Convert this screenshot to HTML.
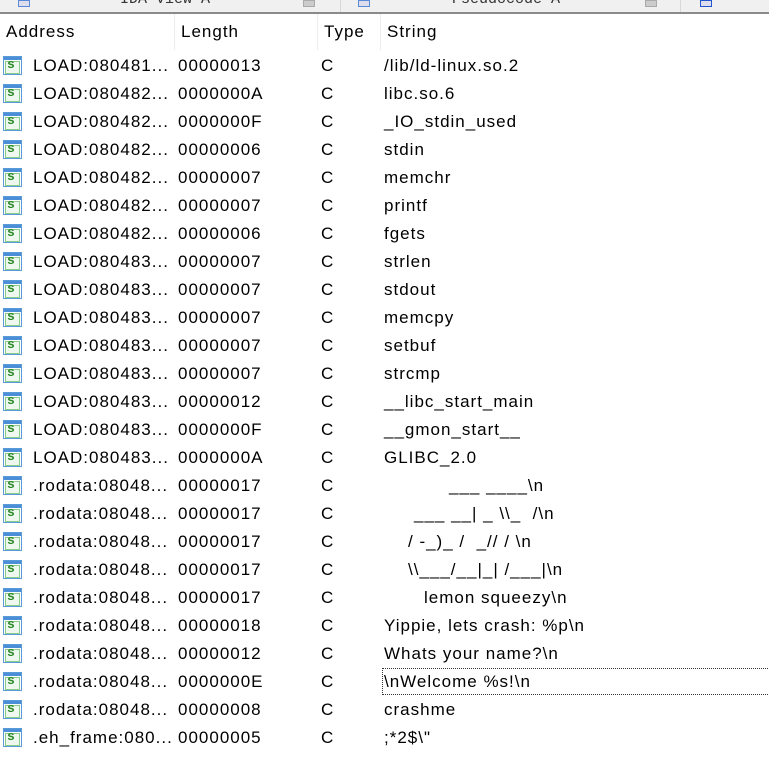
<!DOCTYPE html>
<html><head><meta charset="utf-8"><style>
body{margin:0;width:769px;height:768px;background:#fff;overflow:hidden;font-family:"Liberation Sans",sans-serif;font-size:17px;letter-spacing:1px;color:#000;position:relative}
.tabs{position:absolute;left:0;top:0;width:769px;height:12px;background:#f0f0f0;border-bottom:2px solid #8a8a8a;overflow:hidden}
.tabs span{position:absolute;top:-9px;font-family:"Liberation Mono",monospace;font-size:15px;color:#333;letter-spacing:0}
.tabs i{position:absolute;top:0;width:10px;height:5px;background:#ccc;border:1px solid #aaa}
.tabs b{position:absolute;top:0;width:1px;height:12px;background:#d8d8d8}
.hdr{position:absolute;top:14px;left:0;width:769px;height:36px}
.hdr div{position:absolute;top:8px}
.sep{position:absolute;top:14px;width:1px;height:36px;background:#ececec}
.row{position:absolute;left:0;width:769px;height:28px;line-height:28px;white-space:pre}
.row span{position:absolute;top:0}
.ic{position:absolute;left:3px;top:4px;width:19px;height:19px;border:1px solid #5a9ad8;background:#fff;box-sizing:border-box}
.ic:before{content:"";position:absolute;left:0;top:0;right:0;height:3px;background:#4a8fd8}
.ic:after{content:"";position:absolute;left:1px;top:4px;width:13px;height:11px;border:1px solid #8c8;background:#eef8ee}
.ic em{position:absolute;left:3px;top:-6px;font-style:normal;font-size:13px;font-weight:bold;color:#2a8a2a;font-family:"Liberation Mono",monospace;letter-spacing:0;z-index:1;line-height:28px}
.a{left:33px}.l{left:178px}.t{left:321px}.s{left:384px}
</style></head><body>
<div class="tabs">
<i style="left:18px;border-color:#5a8ad8;background:#dde"></i><span style="left:120px">IDA View-A</span><i style="left:303px"></i><b style="left:340px"></b>
<i style="left:358px;border-color:#5a8ad8;background:#dde"></i><span style="left:452px">Pseudocode-A</span><i style="left:645px"></i><b style="left:680px"></b>
<i style="left:700px;border-color:#2255cc;background:#dde"></i>
</div>
<div class="hdr"><div style="left:6px">Address</div><div style="left:181px">Length</div><div style="left:324px">Type</div><div style="left:387px">String</div></div>
<div class="sep" style="left:174px"></div><div class="sep" style="left:317px"></div><div class="sep" style="left:380px"></div>

<div class="row" style="top:52px"><div class="ic"><em>s</em></div><span class="a">LOAD:080481...</span><span class="l">00000013</span><span class="t">C</span><span class="s">/lib/ld-linux.so.2</span></div>
<div class="row" style="top:80px"><div class="ic"><em>s</em></div><span class="a">LOAD:080482...</span><span class="l">0000000A</span><span class="t">C</span><span class="s">libc.so.6</span></div>
<div class="row" style="top:108px"><div class="ic"><em>s</em></div><span class="a">LOAD:080482...</span><span class="l">0000000F</span><span class="t">C</span><span class="s">_IO_stdin_used</span></div>
<div class="row" style="top:136px"><div class="ic"><em>s</em></div><span class="a">LOAD:080482...</span><span class="l">00000006</span><span class="t">C</span><span class="s">stdin</span></div>
<div class="row" style="top:164px"><div class="ic"><em>s</em></div><span class="a">LOAD:080482...</span><span class="l">00000007</span><span class="t">C</span><span class="s">memchr</span></div>
<div class="row" style="top:192px"><div class="ic"><em>s</em></div><span class="a">LOAD:080482...</span><span class="l">00000007</span><span class="t">C</span><span class="s">printf</span></div>
<div class="row" style="top:220px"><div class="ic"><em>s</em></div><span class="a">LOAD:080482...</span><span class="l">00000006</span><span class="t">C</span><span class="s">fgets</span></div>
<div class="row" style="top:248px"><div class="ic"><em>s</em></div><span class="a">LOAD:080483...</span><span class="l">00000007</span><span class="t">C</span><span class="s">strlen</span></div>
<div class="row" style="top:276px"><div class="ic"><em>s</em></div><span class="a">LOAD:080483...</span><span class="l">00000007</span><span class="t">C</span><span class="s">stdout</span></div>
<div class="row" style="top:304px"><div class="ic"><em>s</em></div><span class="a">LOAD:080483...</span><span class="l">00000007</span><span class="t">C</span><span class="s">memcpy</span></div>
<div class="row" style="top:332px"><div class="ic"><em>s</em></div><span class="a">LOAD:080483...</span><span class="l">00000007</span><span class="t">C</span><span class="s">setbuf</span></div>
<div class="row" style="top:360px"><div class="ic"><em>s</em></div><span class="a">LOAD:080483...</span><span class="l">00000007</span><span class="t">C</span><span class="s">strcmp</span></div>
<div class="row" style="top:388px"><div class="ic"><em>s</em></div><span class="a">LOAD:080483...</span><span class="l">00000012</span><span class="t">C</span><span class="s">__libc_start_main</span></div>
<div class="row" style="top:416px"><div class="ic"><em>s</em></div><span class="a">LOAD:080483...</span><span class="l">0000000F</span><span class="t">C</span><span class="s">__gmon_start__</span></div>
<div class="row" style="top:444px"><div class="ic"><em>s</em></div><span class="a">LOAD:080483...</span><span class="l">0000000A</span><span class="t">C</span><span class="s">GLIBC_2.0</span></div>
<div class="row" style="top:472px"><div class="ic"><em>s</em></div><span class="a">.rodata:08048...</span><span class="l">00000017</span><span class="t">C</span><span style="left:449px">___ ____\n</span></div>
<div class="row" style="top:500px"><div class="ic"><em>s</em></div><span class="a">.rodata:08048...</span><span class="l">00000017</span><span class="t">C</span><span style="left:414px">___ __| _ \\_  /\n</span></div>
<div class="row" style="top:528px"><div class="ic"><em>s</em></div><span class="a">.rodata:08048...</span><span class="l">00000017</span><span class="t">C</span><span style="left:408px">/ -_)_ /  _// / \n</span></div>
<div class="row" style="top:556px"><div class="ic"><em>s</em></div><span class="a">.rodata:08048...</span><span class="l">00000017</span><span class="t">C</span><span style="left:408px">\\___/__|_| /___|\n</span></div>
<div class="row" style="top:584px"><div class="ic"><em>s</em></div><span class="a">.rodata:08048...</span><span class="l">00000017</span><span class="t">C</span><span style="left:424px">lemon squeezy\n</span></div>
<div class="row" style="top:612px"><div class="ic"><em>s</em></div><span class="a">.rodata:08048...</span><span class="l">00000018</span><span class="t">C</span><span class="s">Yippie, lets crash: %p\n</span></div>
<div class="row" style="top:640px"><div class="ic"><em>s</em></div><span class="a">.rodata:08048...</span><span class="l">00000012</span><span class="t">C</span><span class="s">Whats your name?\n</span></div>
<div class="row" style="top:668px"><div class="ic"><em>s</em></div><span class="a">.rodata:08048...</span><span class="l">0000000E</span><span class="t">C</span><span class="s">\nWelcome %s!\n</span><div style="position:absolute;left:382px;top:0;width:400px;height:27px;border:1px dotted #333;border-right:none;box-sizing:border-box"></div></div>
<div class="row" style="top:696px"><div class="ic"><em>s</em></div><span class="a">.rodata:08048...</span><span class="l">00000008</span><span class="t">C</span><span class="s">crashme</span></div>
<div class="row" style="top:724px"><div class="ic"><em>s</em></div><span class="a">.eh_frame:080...</span><span class="l">00000005</span><span class="t">C</span><span class="s">;*2$\"</span></div>
</body></html>
